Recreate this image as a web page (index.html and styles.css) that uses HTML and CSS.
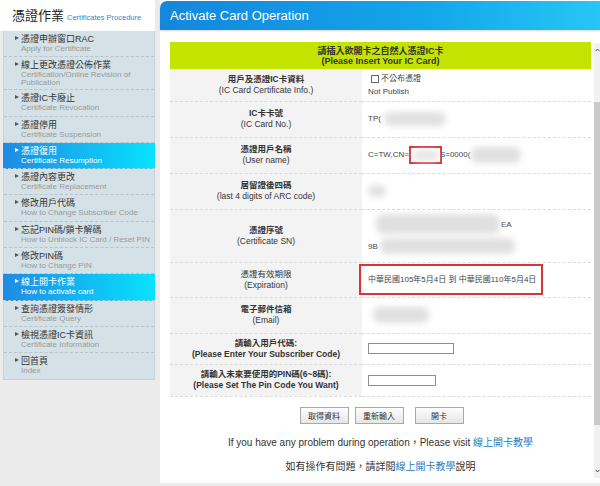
FILE: index.html
```html
<!DOCTYPE html>
<html lang="zh-Hant">
<head>
    <meta charset="UTF-8">
    <meta name="viewport" content="width=device-width, initial-scale=1.0">
    <title>Activate Card Operation</title>
    <link rel="stylesheet" href="styles.css">
</head>
<body>
    <div class="page">
        <aside class="sidebar">
            <div class="side-head">
                <span class="side-title">憑證作業</span>
                <span class="side-sub">Certificates Procedure</span>
            </div>
            <ul class="menu">
                <li class="item"><span class="arrow"></span><div><div class="zh">憑證申辦窗口RAC</div><div class="en">Apply for Certificate</div></div></li>
                <li class="item"><span class="arrow"></span><div><div class="zh">線上更改憑證公佈作業</div><div class="en wrap">Certification/Online Revision of Publication</div></div></li>
                <li class="item"><span class="arrow"></span><div><div class="zh">憑證IC卡廢止</div><div class="en">Certificate Revocation</div></div></li>
                <li class="item"><span class="arrow"></span><div><div class="zh">憑證停用</div><div class="en">Certificate Suspension</div></div></li>
                <li class="item active"><span class="arrow"></span><div><div class="zh">憑證復用</div><div class="en">Certificate Resumption</div></div></li>
                <li class="item"><span class="arrow"></span><div><div class="zh">憑證內容更改</div><div class="en">Certificate Replacement</div></div></li>
                <li class="item"><span class="arrow"></span><div><div class="zh">修改用戶代碼</div><div class="en">How to Change Subscriber Code</div></div></li>
                <li class="item"><span class="arrow"></span><div><div class="zh">忘記PIN碼/鎖卡解碼</div><div class="en">How to Unblock IC Card / Reset PIN</div></div></li>
                <li class="item"><span class="arrow"></span><div><div class="zh">修改PIN碼</div><div class="en">How to Change PIN</div></div></li>
                <li class="item active"><span class="arrow"></span><div><div class="zh">線上開卡作業</div><div class="en">How to activate card</div></div></li>
                <li class="item"><span class="arrow"></span><div><div class="zh">查詢憑證簽發情形</div><div class="en">Certificate Query</div></div></li>
                <li class="item"><span class="arrow"></span><div><div class="zh">檢視憑證IC卡資訊</div><div class="en">Certificate Information</div></div></li>
                <li class="item"><span class="arrow"></span><div><div class="zh">回首頁</div><div class="en">Index</div></div></li>
            </ul>
        </aside>

        <main class="main">
            <div class="main-head">Activate Card Operation</div>
            <div class="frame">
                <div class="content">
                    <table class="card-table">
                        <tr class="notice">
                            <td colspan="2">請插入欲開卡之自然人憑證IC卡<br>(Please Insert Your IC Card)</td>
                        </tr>
                        <tr class="h32">
                            <td class="label"><b>用戶及憑證IC卡資料</b><br>(IC Card Certificate Info.)</td>
                            <td class="value"><label class="publish"><input type="checkbox" class="check">不公布憑證</label><br>Not Publish</td>
                        </tr>
                        <tr class="h36">
                            <td class="label"><b>IC卡卡號</b><br>(IC Card No.)</td>
                            <td class="value">TP(<span class="blur blur-card"></span></td>
                        </tr>
                        <tr class="h36">
                            <td class="label"><b>憑證用戶名稱</b><br>(User name)</td>
                            <td class="value">C=TW,CN=<span class="mark-box"><span class="blur blur-name"></span></span><span class="after-box">S=0000(</span><span class="blur blur-tail"></span></td>
                        </tr>
                        <tr class="h36">
                            <td class="label"><b>居留證後四碼</b><br>(last 4 digits of ARC code)</td>
                            <td class="value"><span class="blur blur-arc"></span></td>
                        </tr>
                        <tr class="h53">
                            <td class="label"><b>憑證序號</b><br>(Certificate SN)</td>
                            <td class="value">
                                <div class="sn-line"><span class="blur blur-sn1"></span>EA</div>
                                <div class="sn-line">9B<span class="blur blur-sn2"></span></div>
                            </td>
                        </tr>
                        <tr class="h35">
                            <td class="label">憑證有效期限<br>(Expiration)</td>
                            <td class="value"><span class="date-box">中華民國105年5月4日 到 中華民國110年5月4日</span></td>
                        </tr>
                        <tr class="h36">
                            <td class="label"><b>電子郵件信箱</b><br>(Email)</td>
                            <td class="value"><span class="blur blur-mail"></span></td>
                        </tr>
                        <tr class="h31">
                            <td class="label"><b>請輸入用戶代碼:<br>(Please Enter Your Subscriber Code)</b></td>
                            <td class="value"><input type="text" class="field"></td>
                        </tr>
                        <tr class="h32">
                            <td class="label"><b>請輸入未來要使用的PIN碼(6~8碼):<br>(Please Set The Pin Code You Want)</b></td>
                            <td class="value"><input type="password" class="field field-pin"></td>
                        </tr>
                    </table>

                    <div class="actions">
                        <button class="btn">取得資料</button>
                        <button class="btn">重新輸入</button>
                        <button class="btn btn-open">開卡</button>
                    </div>

                    <p class="help help-en">If you have any problem during operation，Please visit <a href="#">線上開卡教學</a></p>
                    <p class="help">如有操作有問題，請詳閱<a href="#">線上開卡教學</a>說明</p>
                </div>

                <div class="scrollbar">
                    <span class="sb-btn"><svg width="5" height="4" viewBox="0 0 5 4"><path d="M0.5 3.2 L2.5 1 L4.5 3.2" fill="none" stroke="#555" stroke-width="1"/></svg></span>
                    <div class="sb-track"><div class="sb-thumb"></div></div>
                    <span class="sb-btn"><svg width="5" height="4" viewBox="0 0 5 4"><path d="M0.5 0.8 L2.5 3 L4.5 0.8" fill="none" stroke="#555" stroke-width="1"/></svg></span>
                </div>
            </div>
        </main>
    </div>
</body>
</html>
```

FILE: styles.css
```css
body {
    margin: 0;
    background-color: #ebebeb;
    font-family: "Liberation Sans", "Noto Sans CJK TC", sans-serif;
    color: #333;
}

.page {
    display: flex;
    height: 486px;
    overflow: hidden;
}

/* sidebar */
.sidebar {
    width: 155px;
    flex-shrink: 0;
}

.side-head {
    height: 31px;
    box-sizing: border-box;
    padding: 8px 0 0 12px;
    background-color: #fff;
    display: flex;
    align-items: baseline;
}

.side-title {
    font-size: 13px;
    line-height: 15px;
    color: #222;
}

.side-sub {
    font-size: 7.5px;
    color: #3c84cc;
    margin-left: 3px;
}

.menu {
    list-style: none;
    margin: 0 0 0 3px;
    padding: 0;
    background-color: #d4e1e7;
    border: 1px solid #c6d4da;
    border-top: none;
}

.item {
    display: flex;
    padding: 3px 0 3px 11px;
    border-bottom: 1px dashed #b7c5cb;
}

.item:last-child {
    border-bottom: none;
}

.arrow {
    width: 0;
    height: 0;
    border-left: 4px solid #555;
    border-top: 2.5px solid transparent;
    border-bottom: 2.5px solid transparent;
    margin: 2px 2px 0 0;
    flex-shrink: 0;
}

.zh {
    font-size: 9px;
    line-height: 10px;
    color: #333;
}

.en {
    font-size: 8px;
    line-height: 9.3px;
    color: #9a9a9a;
}

.en.wrap {
    line-height: 7.5px;
    padding-top: 1px;
}

.item.active {
    background: linear-gradient(to right, #1e8be4, #08e2fe);
    margin: 0 -1px 0 -1px;
    padding-left: 12px;
}

.item.active .zh,
.item.active .en {
    color: #fff;
}

.item.active .arrow {
    border-left-color: #fff;
}

/* main panel */
.main {
    flex: 1;
    margin: 0 0 3px 5px;
    background-color: #fff;
    display: flex;
    flex-direction: column;
    min-width: 0;
}

.main-head {
    height: 29px;
    margin-top: 1px;
    padding-left: 10px;
    line-height: 29px;
    font-size: 13px;
    color: #fff;
    border-radius: 7px 0 0 0;
    background: linear-gradient(to right, #1586dc, #13a6ea 60%, #27c6f6);
    box-shadow: 0 1px 2px rgba(0, 0, 0, 0.15);
}

.frame {
    flex: 1;
    display: flex;
    min-height: 0;
}

.content {
    flex: 1;
    padding: 12px 3px 0 10px;
}

/* card table */
.card-table {
    width: 421px;
    border-collapse: collapse;
}

.card-table td {
    padding: 0;
    vertical-align: middle;
    border-bottom: 1px dashed #dcdcdc;
}

.notice td {
    height: 27px;
    background-color: #c4e400;
    text-align: center;
    font-weight: bold;
    font-size: 9px;
    line-height: 10px;
    color: #333;
    border-bottom: none;
}

.h31 { height: 31px; }
.h32 { height: 32px; }
.h35 { height: 35px; }
.h36 { height: 36px; }
.h53 { height: 53px; }

.label {
    width: 192px;
    background-color: #f3f3f3;
    text-align: center;
    font-size: 8.5px;
    line-height: 11px;
    color: #333;
}

.value {
    padding-left: 6px !important;
    font-size: 8px;
    line-height: 11px;
    color: #444;
}

.publish {
    display: inline-flex;
    align-items: center;
    margin-left: 3px;
}

.check {
    appearance: none;
    width: 8px;
    height: 8px;
    margin: 0 2px 0 0;
    border: 1px solid #666;
    background-color: #fff;
}

.blur {
    display: inline-block;
    vertical-align: middle;
    background-color: #e0e0e0;
    border-radius: 7px;
    filter: blur(3px);
}

.blur-card { width: 62px; height: 14px; margin-left: 3px; }
.blur-name { width: 26px; height: 11px; margin: 2px 0 0 2px; background-color: #e6e6e6; }
.blur-tail { width: 50px; height: 16px; margin-left: 1px; }
.blur-arc { width: 18px; height: 12px; }
.blur-sn1 { width: 124px; height: 20px; margin: 0 1px 0 8px; }
.blur-sn2 { width: 135px; height: 16px; margin-left: 2px; }
.blur-mail { width: 56px; height: 16px; margin-left: 5px; }

.mark-box {
    display: inline-block;
    vertical-align: middle;
    width: 33px;
    height: 18px;
    box-sizing: border-box;
    border: 2px solid #d8343c;
}

.after-box {
    margin-left: -2px;
}

.sn-line {
    height: 22px;
    line-height: 22px;
}

.date-box {
    display: inline-block;
    margin-left: -9px;
    padding: 8px 5px 8px 7px;
    border: 2px solid #d8343c;
}

.field {
    width: 86px;
    height: 11px;
    box-sizing: border-box;
    padding: 0;
    border: 1px solid #8f8f8f;
    vertical-align: middle;
}

.field-pin {
    width: 68px;
}

/* buttons + help */
.actions {
    margin-top: 10px;
    display: flex;
    justify-content: center;
    padding-left: 2px;
}

.btn {
    width: 49px;
    height: 17px;
    padding: 0;
    margin: 0 3px;
    font-family: inherit;
    font-size: 8px;
    color: #333;
    border: 1px solid #a8a8a8;
    background: linear-gradient(#fdfdfd, #e6e6e6);
}

.btn-open {
    margin-left: 8px;
}

.help {
    margin: 12px 0 0;
    text-align: center;
    font-size: 10px;
    line-height: 12px;
    color: #333;
}

.help-en {
    margin-top: 13px;
}

.help a {
    color: #2b7cc0;
    text-decoration: none;
}

/* fake frame scrollbar */
.scrollbar {
    width: 6px;
    margin: 13px 0 5px;
    background-color: #f1f1f1;
    display: flex;
    flex-direction: column;
}

.sb-btn {
    height: 14px;
    display: flex;
    align-items: center;
    justify-content: flex-end;
}

.sb-track {
    flex: 1;
}

.sb-thumb {
    margin-top: 45px;
    height: 323px;
    background-color: #c9c9c9;
}
```
